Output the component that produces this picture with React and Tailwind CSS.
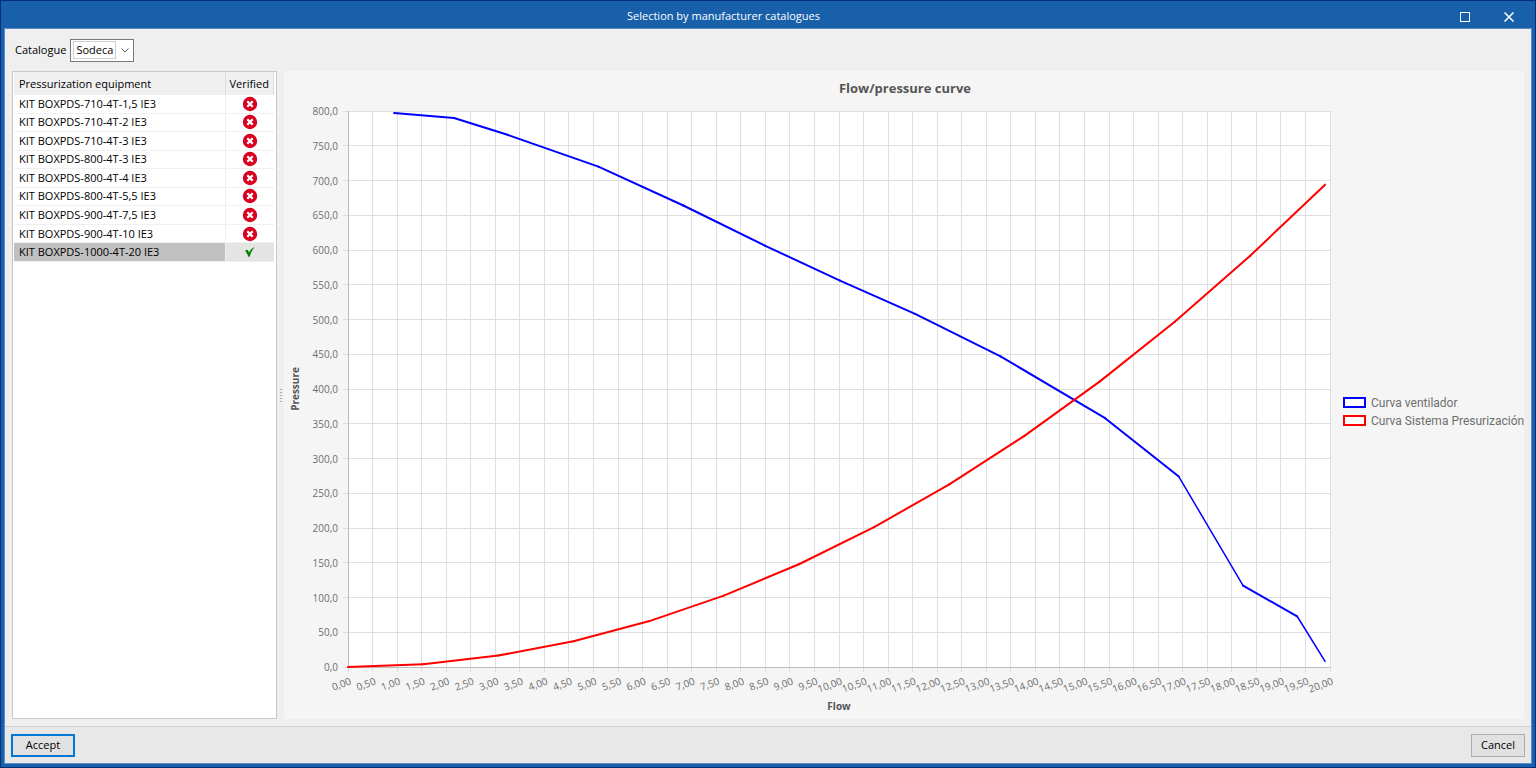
import React, { useState } from "react";

const EQUIPMENT = [
  { name: "KIT BOXPDS-710-4T-1,5 IE3", verified: false },
  { name: "KIT BOXPDS-710-4T-2 IE3", verified: false },
  { name: "KIT BOXPDS-710-4T-3 IE3", verified: false },
  { name: "KIT BOXPDS-800-4T-3 IE3", verified: false },
  { name: "KIT BOXPDS-800-4T-4 IE3", verified: false },
  { name: "KIT BOXPDS-800-4T-5,5 IE3", verified: false },
  { name: "KIT BOXPDS-900-4T-7,5 IE3", verified: false },
  { name: "KIT BOXPDS-900-4T-10 IE3", verified: false },
  { name: "KIT BOXPDS-1000-4T-20 IE3", verified: true },
];

// [flow, pressure]
const FAN_CURVE = [
  [0.94, 797],
  [2.16, 790],
  [3.2, 767],
  [5.1, 720],
  [6.83, 664],
  [8.5, 606],
  [10.02, 556],
  [11.55, 508],
  [13.29, 447],
  [15.42, 358],
  [16.92, 274],
  [18.23, 117],
  [19.33, 73],
  [19.9, 8],
];

// The system loses pressure with the square of the flow
const SYSTEM_CURVE = Array.from({ length: 14 }, (_, i) => [
  (19.9 * i) / 13,
  694 * (i / 13) ** 2,
]);

const PLOT = { left: 64, right: 1046, top: 40, bottom: 596 };
const MAX_FLOW = 20;
const MAX_PRESSURE = 800;

const toX = (flow) => PLOT.left + (flow / MAX_FLOW) * (PLOT.right - PLOT.left);
const toY = (pressure) =>
  PLOT.bottom - (pressure / MAX_PRESSURE) * (PLOT.bottom - PLOT.top);
const format = (value, digits) => value.toFixed(digits).replace(".", ",");

const FLOW_TICKS = Array.from({ length: 41 }, (_, i) => i * 0.5);
const PRESSURE_TICKS = Array.from({ length: 17 }, (_, i) => i * 50);

function RejectedIcon() {
  return (
    <svg className="mx-auto block size-4" viewBox="0 0 16 16" role="img" aria-label="Not verified">
      <circle cx="8" cy="8" r="7.2" fill="#d9001f" />
      <path d="M5.3 5.3l5.4 5.4M10.7 5.3l-5.4 5.4" stroke="#fff" strokeWidth="2.3" />
    </svg>
  );
}

function VerifiedIcon() {
  return (
    <svg className="mx-auto block size-4" viewBox="0 0 16 16" role="img" aria-label="Verified">
      <path d="M3 6.500l2.600-.7 1.500 2.700c1.200-2.300 2.700-4.200 5.500-5.500-2.200 2.700-3.700 5.600-4.900 9.700H6.400C5.600 10.600 4.600 8.600 3 6.500z" fill="#008000" />
    </svg>
  );
}

function EquipmentTable({ selected, onSelect }) {
  return (
    <div className="w-[265px] shrink-0 border border-[#c8c8c8] bg-white px-px">
      <table className="h-[190px] w-[260px] table-fixed border-collapse">
        <thead className="bg-[#f0f0f0]">
          <tr className="h-[23px]">
            <th className="w-[211px] border-r border-[#dcdcdc] p-0 pt-px pl-[5px] text-left font-normal">
              Pressurization equipment
            </th>
            <th className="border-r border-[#dcdcdc] p-0 pt-px text-center font-normal">
              Verified
            </th>
          </tr>
        </thead>
        <tbody>
          {EQUIPMENT.map((item, index) => (
            <tr
              key={item.name}
              onClick={() => onSelect(index)}
              aria-selected={index === selected}
              className="border-b border-[#f0f0f0] leading-4"
            >
              <td
                className={
                  index === selected
                    ? "border-r border-[#f0f0f0] bg-[#c0c0c0] p-0 pl-[5px]"
                    : "border-r border-[#f0f0f0] p-0 pl-[5px]"
                }
              >
                {item.name}
              </td>
              <td className={index === selected ? "bg-[#e4e4e4] p-0" : "p-0"}>
                {item.verified ? <VerifiedIcon /> : <RejectedIcon />}
              </td>
            </tr>
          ))}
        </tbody>
      </table>
    </div>
  );
}

function Curve({ points, color }) {
  return (
    <g stroke={color} strokeLinecap="round">
      {points.slice(1).map(([flow, pressure], i) => {
        const [x1, y1] = [toX(points[i][0]), toY(points[i][1])];
        const [x2, y2] = [toX(flow), toY(pressure)];
        // steep downward parts get a thinner pen
        const steep = y2 - y1 > x2 - x1;
        return (
          <line key={flow} x1={x1} y1={y1} x2={x2} y2={y2} strokeWidth={steep ? 1.5 : 2} />
        );
      })}
    </g>
  );
}

function CurveChart() {
  return (
    <svg
      className="h-full w-full"
      viewBox="0 0 1240 648"
      fontFamily='"Open Sans", "Noto Sans", sans-serif'
      fill="#6e6e6e"
    >
      <text x="621" y="22" textAnchor="middle" fontSize="13" fontWeight="700" fill="#555">
        Flow/pressure curve
      </text>

      <rect
        x={PLOT.left}
        y={PLOT.top}
        width={PLOT.right - PLOT.left}
        height={PLOT.bottom - PLOT.top}
        fill="#fff"
      />
      <g stroke="#dfdfdf" shapeRendering="crispEdges">
        {FLOW_TICKS.map((flow) => (
          <line key={flow} x1={toX(flow)} x2={toX(flow)} y1={PLOT.top} y2={PLOT.bottom + 5} />
        ))}
        {PRESSURE_TICKS.map((pressure) => (
          <line
            key={pressure}
            x1={PLOT.left - 5}
            x2={PLOT.right}
            y1={toY(pressure)}
            y2={toY(pressure)}
          />
        ))}
      </g>
      <path
        d={`M${PLOT.left} ${PLOT.top}V${PLOT.bottom}H${PLOT.right}`}
        fill="none"
        stroke="#bdbdbd"
        shapeRendering="crispEdges"
      />

      <g fontSize="10" textAnchor="end">
        {PRESSURE_TICKS.map((pressure) => (
          <text key={pressure} x="54" y={toY(pressure) + 4}>
            {format(pressure, 1)}
          </text>
        ))}
        {FLOW_TICKS.map((flow) => (
          <text
            key={flow}
            transform={`translate(${toX(flow) + 4} ${PLOT.bottom + 17}) rotate(-20)`}
          >
            {format(flow, 2)}
          </text>
        ))}
      </g>

      <g fontSize="10" fontWeight="700" textAnchor="middle" fill="#555">
        <text x="555" y="639">
          Flow
        </text>
        <text transform="translate(15 318) rotate(-90)">Pressure</text>
      </g>

      <Curve points={FAN_CURVE} color="#0000ff" />
      <Curve points={SYSTEM_CURVE} color="#ff0000" />

      <g fontSize="12" fontFamily='Roboto, "Noto Sans", sans-serif'>
        <rect x="1060" y="327" width="21" height="9" fill="#fff" stroke="#0000ff" strokeWidth="2" />
        <text x="1087" y="336">
          Curva ventilador
        </text>
        <rect x="1060" y="345" width="21" height="9" fill="#fff" stroke="#ff0000" strokeWidth="2" />
        <text x="1087" y="354">
          Curva Sistema Presurización
        </text>
      </g>
    </svg>
  );
}

function TitleBar() {
  return (
    <header className="flex h-[27px] shrink-0 items-center text-white">
      <h1 className="flex-1 pt-1 text-center">Selection by manufacturer catalogues</h1>
      <div className="flex h-full w-[89px] pt-1">
        <button type="button" aria-label="Maximize" className="flex w-11 items-center justify-center">
          <svg className="size-[10px]" viewBox="0 0 10 10">
            <rect x="0.5" y="0.5" width="9" height="9" fill="none" stroke="#fff" />
          </svg>
        </button>
        <button type="button" aria-label="Close" className="flex w-11 items-center justify-center">
          <svg className="size-[10px]" viewBox="0 0 10 10">
            <path d="M0.500 0.500l9 9M9.500 0.500l-9 9" stroke="#fff" strokeWidth="1.500" />
          </svg>
        </button>
      </div>
    </header>
  );
}

function App() {
  const [selected, setSelected] = useState(8);
  const [catalogue, setCatalogue] = useState("Sodeca");

  return (
    <div className="flex h-screen flex-col border border-[#002f80] bg-[#1860aa] px-[3px] pb-[3px] font-['Open_Sans','Noto_Sans',sans-serif] text-[11px] text-black">
      <TitleBar />
      <div className="flex min-h-0 flex-1 flex-col border border-[#5b8fc6] bg-[#efefef]">
        <div className="flex h-[42px] shrink-0 items-center gap-1 pl-[10px]">
          <label htmlFor="catalogue">Catalogue</label>
          <div className="relative flex h-[23px] w-[64px] items-center border border-[#7a7a7a] bg-white p-[2px]">
            <select
              id="catalogue"
              value={catalogue}
              onChange={(e) => setCatalogue(e.target.value)}
              className="h-[18px] w-[43px] appearance-none border border-[#cfcfcf] pl-[2px]"
            >
              <option value="Sodeca">Sodeca</option>
            </select>
            <svg className="pointer-events-none ml-[5px] h-[5px] w-[8px]" viewBox="0 0 8 5">
              <path d="M0.500 0.500L4 4l3.500-3.500" fill="none" stroke="#555" />
            </svg>
          </div>
        </div>

        <main className="flex min-h-0 flex-1 px-[7px] pb-[7px]">
          <EquipmentTable selected={selected} onSelect={setSelected} />
          <div className="flex w-[7px] shrink-0 flex-col items-center justify-center gap-[2px]">
            <span className="h-px w-[2px] bg-[#aaa]" />
            <span className="h-px w-[2px] bg-[#aaa]" />
            <span className="h-px w-[2px] bg-[#aaa]" />
            <span className="h-px w-[2px] bg-[#aaa]" />
            <span className="h-px w-[2px] bg-[#aaa]" />
          </div>
          <section className="min-w-0 flex-1 bg-[#f5f5f5]">
            <CurveChart />
          </section>
        </main>

        <footer className="flex h-[37px] shrink-0 items-center justify-between border-t border-[#d2d2d2] bg-[#e8e8e8] px-[6px]">
          <button type="button" className="h-[23px] w-[64px] border-2 border-[#0078d7] bg-[#e1e1e1]">
            Accept
          </button>
          <button type="button" className="h-[23px] w-[54px] border border-[#adadad] bg-[#e1e1e1]">
            Cancel
          </button>
        </footer>
      </div>
    </div>
  );
}

export default App;
